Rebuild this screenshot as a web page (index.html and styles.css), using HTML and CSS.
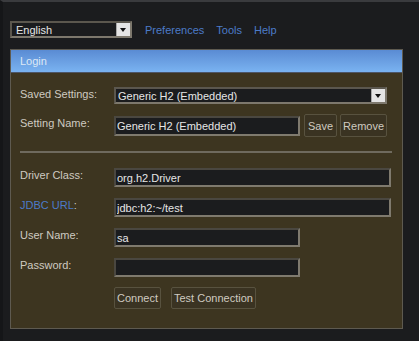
FILE: index.html
```html
<!DOCTYPE html>
<html lang="en">

<head>
    <meta charset="UTF-8">
    <meta name="viewport" content="width=device-width, initial-scale=1.0">
    <title>H2 Console</title>
    <link rel="stylesheet" href="styles.css">
</head>

<body>
    <div class="toolbar">
        <div class="select lang">
            <span class="select-text">English</span>
            <span class="arrow"></span>
        </div>
        <a class="link first" href="#">Preferences</a>
        <a class="link" href="#">Tools</a>
        <a class="link" href="#">Help</a>
    </div>

    <div class="panel">
        <div class="panel-head">Login</div>
        <div class="panel-body">
            <div class="row row-first">
                <span class="label">Saved Settings:</span>
                <div class="select saved">
                    <span class="select-text">Generic H2 (Embedded)</span>
                    <span class="arrow"></span>
                </div>
            </div>
            <div class="row row-name">
                <span class="label">Setting Name:</span>
                <div class="inline">
                    <input class="field short" type="text" value="Generic H2 (Embedded)">
                    <button class="btn">Save</button>
                    <button class="btn btn-remove">Remove</button>
                </div>
            </div>

            <div class="rule"></div>

            <div class="row">
                <span class="label">Driver Class:</span>
                <input class="field" type="text" value="org.h2.Driver">
            </div>
            <div class="row">
                <span class="label"><a class="label-link" href="#">JDBC URL</a>:</span>
                <input class="field" type="text" value="jdbc:h2:~/test">
            </div>
            <div class="row">
                <span class="label">User Name:</span>
                <input class="field short" type="text" value="sa">
            </div>
            <div class="row">
                <span class="label">Password:</span>
                <input class="field short" type="password" value="">
            </div>
            <div class="row row-buttons">
                <span></span>
                <div class="inline">
                    <button class="btn btn-big">Connect</button>
                    <button class="btn btn-big btn-test">Test Connection</button>
                </div>
            </div>
        </div>
    </div>
</body>

</html>
```

FILE: styles.css
```css
* {
    margin: 0;
    padding: 0;
    box-sizing: border-box;
}

body {
    background-color: #1b1c1e;
    border-top: 2px solid #3a3b3e;
    border-left: 3px solid #151618;
    min-height: 100vh;
    font-family: "Liberation Sans", Arial, sans-serif;
    font-size: 11px;
    color: #cfcac0;
}

.toolbar {
    display: flex;
    align-items: center;
    padding: 19px 0 0 7px;
}

.link {
    color: #4c7bc9;
    text-decoration: none;
    margin-left: 12px;
}

.link.first {
    margin-left: 13px;
}

/* fake select boxes */
.select {
    display: flex;
    align-items: center;
    justify-content: space-between;
    height: 17px;
    background-color: #1b1c1e;
    border: 2px solid;
    border-color: #5b574e #7d786d #7d786d #5b574e;
    color: #e6e6e6;
    padding-left: 4px;
}

.lang {
    width: 122px;
}

.saved {
    width: 273px;
    padding-left: 2px;
}

.arrow {
    position: relative;
    width: 14px;
    height: 13px;
    background-color: #e4e4e4;
    border-left: 1px solid #a8a8a8;
}

.arrow::after {
    content: "";
    position: absolute;
    left: 3px;
    top: 5px;
    border-left: 3px solid transparent;
    border-right: 3px solid transparent;
    border-top: 4px solid #111;
}

.panel {
    width: 393px;
    margin: 11px 0 0 7px;
    border: 1px solid #5e5a50;
}

.panel-head {
    height: 23px;
    line-height: 22px;
    padding-left: 9px;
    color: #dde8f5;
    background: linear-gradient(#5a8bd3, #7ab3f1);
    border-bottom: 1px solid #4d5566;
}

.panel-body {
    background-color: #3d3520;
    padding: 14px 10px 19px 9px;
}

.row {
    display: grid;
    grid-template-columns: 94px 1fr;
    align-items: start;
    margin-bottom: 11px;
}

.row-first {
    margin-bottom: 10px;
}

.row-name {
    align-items: center;
    margin-bottom: 0;
}

.row-buttons {
    margin-bottom: 0;
    margin-top: -1px;
}

.label {
    line-height: 13px;
    padding-top: 1px;
}

.row-name .label {
    padding-top: 0;
    margin-top: -5px;
}

.label-link {
    color: #4c7bc9;
    text-decoration: none;
}

.inline {
    display: flex;
    align-items: center;
}

.field {
    display: block;
    width: 277px;
    height: 19px;
    background-color: #1b1c1e;
    border: 2px solid;
    border-color: #4a4740 #7f7a6e #7f7a6e #4a4740;
    color: #e6e6e6;
    font-family: inherit;
    font-size: 11px;
    padding-left: 1px;
    outline: none;
}

.field.short {
    width: 186px;
}

.row-name .field {
    height: 20px;
}

.btn {
    height: 23px;
    padding: 0 3px;
    margin-left: 4px;
    background-color: #3a3322;
    border: 1px solid #58523f;
    border-radius: 2px;
    color: #cfcac0;
    font-family: inherit;
    font-size: 11px;
}

.btn-remove {
    margin-left: 3px;
    padding: 0 2px;
}

.btn-big {
    height: 22px;
    margin-left: 0;
    padding: 0 2px;
}

.btn-test {
    margin-left: 10px;
}

.rule {
    height: 2px;
    background-color: #6f6a5e;
    margin: 14px 0 15px;
}
```
